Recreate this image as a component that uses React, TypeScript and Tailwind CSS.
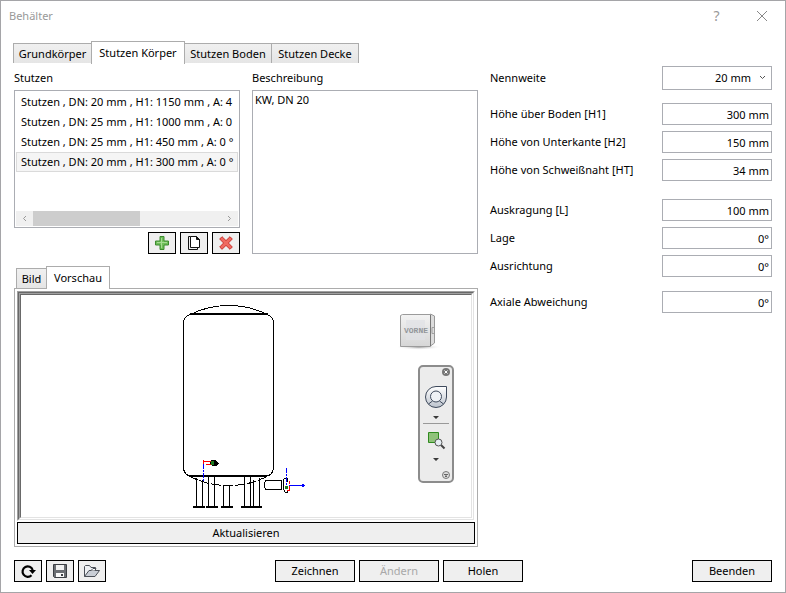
import { useState } from 'react';
import type { ReactNode } from 'react';
import clsx from 'clsx';

const MAIN_TABS = [
  { label: 'Grundkörper', width: 'w-[79px]' },
  { label: 'Stutzen Körper', width: 'w-[94px]' },
  { label: 'Stutzen Boden', width: 'w-[88px]' },
  { label: 'Stutzen Decke', width: 'w-[88px]' },
];

const PREVIEW_TABS = [
  { label: 'Bild', width: 'w-[31px]' },
  { label: 'Vorschau', width: 'w-[64px]' },
];

const NOZZLES = [
  'Stutzen , DN: 20 mm , H1: 1150 mm , A: 4',
  'Stutzen , DN: 25 mm , H1: 1000 mm , A: 0',
  'Stutzen , DN: 25 mm , H1: 450 mm , A: 0 °',
  'Stutzen , DN: 20 mm , H1: 300 mm , A: 0 °',
];

const FIELD_GROUPS = [
  {
    gap: 'mt-[13px]',
    fields: [
      { id: 'h1', label: 'Höhe über Boden [H1]', value: '300 mm' },
      { id: 'h2', label: 'Höhe von Unterkante [H2]', value: '150 mm' },
      { id: 'ht', label: 'Höhe von Schweißnaht [HT]', value: '34 mm' },
    ],
  },
  {
    gap: 'mt-[18px]',
    fields: [
      { id: 'l', label: 'Auskragung [L]', value: '100 mm' },
      { id: 'lage', label: 'Lage', value: '0°' },
      { id: 'ausrichtung', label: 'Ausrichtung', value: '0°' },
    ],
  },
  {
    gap: 'mt-[14px]',
    fields: [{ id: 'axial', label: 'Axiale Abweichung', value: '0°' }],
  },
];

type TabsProps = {
  tabs: { label: string; width: string }[];
  active: number;
  onChange: (index: number) => void;
};

function Tabs({ tabs, active, onChange }: TabsProps) {
  return (
    <div role="tablist" className="flex h-[23px] items-end">
      {tabs.map((tab, i) => (
        <button
          key={tab.label}
          role="tab"
          aria-selected={i === active}
          onClick={() => onChange(i)}
          className={clsx(
            'flex items-center justify-center whitespace-nowrap border border-b-0 border-[#acacac]',
            tab.width,
            i === active ? 'z-10 -ml-px h-full bg-white first:ml-0' : 'mb-px h-5 bg-linear-to-b from-[#f0f0f0] to-[#e5e5e5]',
            i > active && '-ml-px',
          )}
        >
          {tab.label}
        </button>
      ))}
    </div>
  );
}

type PushButtonProps = {
  children: ReactNode;
  label?: string;
  disabled?: boolean;
  className?: string;
};

function PushButton({ children, label, disabled, className }: PushButtonProps) {
  return (
    <button
      aria-label={label}
      disabled={disabled}
      className={clsx(
        'flex h-[22px] items-center justify-center border border-black bg-[#efefef] hover:bg-[#e0eef9] disabled:text-[#a8a8a8]',
        className,
      )}
    >
      {children}
    </button>
  );
}

function Bevel({ children }: { children: ReactNode }) {
  return (
    <div className="border border-t-[#a0a0a0] border-r-white border-b-white border-l-[#a0a0a0]">
      <div className="border border-t-[#696969] border-r-[#e3e3e3] border-b-[#e3e3e3] border-l-[#696969]">{children}</div>
    </div>
  );
}

/* ── icons ── */

function PlusIcon() {
  return (
    <svg width="16" height="16" viewBox="0 0 16 16">
      <path
        d="M6 1.500h4v4.500h4.500v4H10v4.500H6V10H1.500V6H6z"
        fill="#6fbf5a"
        stroke="#3c8a2e"
        strokeLinejoin="round"
      />
      <path d="M7.500 3v10M3 7.500h10" stroke="#a5dc92" fill="none" />
    </svg>
  );
}

function CopyIcon() {
  return (
    <svg width="16" height="16" viewBox="0 0 16 16" fill="none" stroke="#111">
      <path d="M4.500 1.500h-2v13h9v-2" />
      <path d="M4.500 1.500h6l3 3v8h-9z" fill="#fff" />
      <path d="M10.500 1.500v3h3z" fill="#111" />
    </svg>
  );
}

function DeleteIcon() {
  return (
    <svg width="16" height="16" viewBox="0 0 16 16">
      <path
        d="M4 1.700 8 5.600l4-3.900 2.300 2.300L10.400 8l3.900 4-2.300 2.300-4-3.900-4 3.900L1.700 12l3.900-4-3.900-4z"
        fill="#ef6a60"
        stroke="#c9302c"
        strokeLinejoin="round"
      />
    </svg>
  );
}

function ReloadIcon() {
  return (
    <svg width="16" height="16" viewBox="0 0 16 16">
      <path d="M11.500 12.200A5.200 5.200 0 1 1 12.700 7" fill="none" stroke="#000" strokeWidth="2.200" />
      <path d="M9 7h7l-3.500 4z" fill="#000" />
    </svg>
  );
}

function SaveIcon() {
  return (
    <svg width="16" height="16" viewBox="0 0 16 16">
      <path d="M1.500 1.500h13v13h-12l-1-1z" fill="#6b6e73" stroke="#3c3f44" />
      <path d="M4 2h8v5H4z" fill="#f2f2f2" />
      <path d="M4 10h8v4H4z" fill="#fafafa" />
      <path d="M9 11h2v2H9z" fill="#3c3f44" />
    </svg>
  );
}

function FolderIcon() {
  return (
    <svg width="18" height="16" viewBox="0 0 18 16" strokeLinejoin="round" stroke="#4a4f57">
      <path d="M1.500 13.500v-10l1-1h4l1.500 2h4.500v3" fill="#eef0f3" />
      <path d="M1.500 13.500 6 7.500h10.500l-4.500 6z" fill="#c9ced6" />
      <path d="M8 7.500l2-2h3l-1 2" fill="#fff" />
    </svg>
  );
}

/* ── preview ── */

function TankDrawing() {
  return (
    <svg
      viewBox="21 295 450 222"
      width="450"
      height="222"
      fill="none"
      stroke="#000"
      shapeRendering="crispEdges"
      role="img"
      aria-label="Behälter Vorderansicht"
    >
      {/* shell */}
      <path d="M190.500 314.500Q183.500 316 183.500 323V468Q184 475 191 476.500" />
      <path d="M266.500 314.500Q273.500 316 273.500 323V468Q273 475 266 476.500" />
      <path d="M190 314H268M190 476H267" strokeWidth="2" />
      <path d="M190.500 314.500Q208 305.500 228.500 305.500T267.500 314.500" />
      <path d="M188.500 475.500Q206 485.500 228.500 485.500T268.500 475.500" strokeDasharray="10 2" />
      {/* legs */}
      <path d="M196.500 478V507M202.500 480V507M208.500 477V507M214.500 477V507M223.500 485V507M229.500 485V507" />
      <path d="M244.500 477V507M250.500 477V507M253.500 480V507M259.500 478V507" />
      <path d="M193 507H205M206 507H218M221 507H233M241 507H262" strokeWidth="2" />
      {/* small nozzle in front */}
      <path d="M203.500 464V482" stroke="#00f" strokeDasharray="5 1 2 1" />
      <path d="M203.500 460V464M203 461.500H213M206 464.500H212" stroke="#f00" />
      <path d="M211 460h4l4 3-3 3h-4l-2-2z" fill="#000" stroke="none" />
      <path d="M211 461h3v4h-3z" fill="#1e7a1e" stroke="none" />
      {/* side nozzle */}
      <path d="M282 480.500H266.500Q264.500 481 264.500 485T266.500 489.500H282M281.500 480V490" />
      <path d="M283.500 478.500h4v3M283.500 478.500v11l2 3h2v-3" />
      <path d="M285 486h3v3h-3z" fill="#1e7a1e" stroke="none" />
      <path d="M289.500 481V484M287 490.500H289.500V486" stroke="#f00" />
      <path d="M286.500 468V486" stroke="#00f" strokeDasharray="5 1 2 1" />
      <path d="M289 485.500H305M301.500 484.500H304M301.500 486.500H304" stroke="#00f" />
    </svg>
  );
}

function ViewCube() {
  return (
    <svg width="48" height="40" viewBox="0 0 48 40" className="absolute top-4 right-[25px]">
      <defs>
        <linearGradient id="cube" x1="0" y1="0" x2="0" y2="1">
          <stop offset="0" stopColor="#f3f3f3" />
          <stop offset="1" stopColor="#d6d6d6" />
        </linearGradient>
        <radialGradient id="shade">
          <stop offset="0" stopColor="#999" />
          <stop offset="1" stopColor="#fff" stopOpacity="0" />
        </radialGradient>
      </defs>
      <ellipse cx="21" cy="36" rx="23" ry="3" fill="url(#shade)" />
      <path d="M36.500 5l-4-2v32l4-3z" fill="#dcdcdc" stroke="#999" />
      <path d="M2.500 4.500l2-1h28v32h-30z" fill="url(#cube)" stroke="#9b9b9b" />
      <path d="M8 9h19v20H8z" fill="#dfe1e6" opacity=".7" />
      <path d="M32.500 4v31" stroke="#777" />
      <text x="6" y="22" fontSize="8" fontWeight="700" fill="#94979b" fontFamily="Liberation Mono, monospace">
        VORNE
      </text>
      <path d="M36 16.500h-2v6h2" fill="none" stroke="#a0a0a0" />
    </svg>
  );
}

function NavigationBar() {
  return (
    <svg width="36" height="118" viewBox="0 0 36 118" className="absolute top-[70px] right-[17px]">
      <defs>
        <linearGradient id="wheel" x1="0" y1="0" x2="0" y2="1">
          <stop offset="0" stopColor="#fff" />
          <stop offset="1" stopColor="#bcc3cd" />
        </linearGradient>
      </defs>
      <rect x="1" y="1" width="34" height="116" rx="4" fill="#ececec" stroke="#8c8c8c" strokeWidth="2" />
      <circle cx="28" cy="7" r="4" fill="#777" />
      <path d="M26.500 5.500l3 3M29.500 5.500l-3 3" stroke="#fff" />
      {/* steering wheel */}
      <path d="M28.500 21.500H18A10.500 10.500 0 1 0 28.500 32z" fill="url(#wheel)" stroke="#3f4a5c" />
      <path d="M10.500 39l4-3M25.500 39l-4-3" stroke="#3f4a5c" />
      <circle cx="18" cy="31.500" r="5.500" fill="#eef1f5" stroke="#3f4a5c" />
      <path d="M15 51h6l-3 3zM15 93h6l-3 3z" fill="#3a3a3a" />
      <path d="M5 58.500h26" stroke="#999" />
      {/* zoom window */}
      <path d="M10.500 67.500h10v10h-10z" fill="#8fc27a" stroke="#2f8a1f" />
      <path d="M23 80l3.500 3.500" stroke="#444" strokeWidth="2" />
      <circle cx="20.500" cy="77.500" r="3.500" fill="#e6edf3" stroke="#555" />
      <circle cx="28" cy="110" r="3.500" fill="#ddd" stroke="#777" />
      <path d="M26 109.500h4M27 111h2l-1 1z" stroke="#666" fill="#666" />
    </svg>
  );
}

export default function App() {
  const [mainTab, setMainTab] = useState(1);
  const [previewTab, setPreviewTab] = useState(1);
  const [selected, setSelected] = useState(3);

  return (
    <div className="min-h-screen border border-[#a5a5a8] bg-white font-['Noto_Sans','Open_Sans',sans-serif] text-[11px] leading-4 text-black">
      <header className="flex h-[30px] items-center justify-between pl-2 text-[#999]">
        <h1>Behälter</h1>
        <div className="flex h-full">
          <button aria-label="Hilfe" className="w-[45px] text-sm">?</button>
          <button aria-label="Schließen" className="flex w-[46px] items-center justify-center">
            <svg width="12" height="12" viewBox="0 0 12 12" stroke="#888">
              <path d="M1 1l10 10M11 1L1 11" />
            </svg>
          </button>
        </div>
      </header>

      <div className="px-[13px] py-[10px]">
        <div className="-ml-px">
          <Tabs tabs={MAIN_TABS} active={mainTab} onChange={setMainTab} />
        </div>

        <main className="mt-0.5 flex gap-3">
          <div className="min-w-0 flex-1">
            <div className="grid grid-cols-2 gap-3">
              <section className="min-w-0">
                <h2 className="h-6 leading-6">Stutzen</h2>
                <div className="flex h-[138px] flex-col justify-between border border-[#abadb3] p-px">
                  <ul role="listbox" aria-label="Stutzen" className="overflow-hidden">
                    {NOZZLES.map((nozzle, i) => (
                      <li
                        key={nozzle}
                        role="option"
                        aria-selected={i === selected}
                        onClick={() => setSelected(i)}
                        className={clsx(
                          'h-5 border px-1 leading-[18px] whitespace-nowrap',
                          i === selected ? 'border-[#dadada] bg-[#f5f5f5]' : 'border-transparent',
                        )}
                      >
                        {nozzle}
                      </li>
                    ))}
                  </ul>
                  <div className="flex h-[15px] items-stretch bg-[#f0f0f0]">
                    <button aria-label="Nach links" className="flex w-[17px] items-center justify-center">
                      <svg width="5" height="7" viewBox="0 0 5 7" fill="none" stroke="#999">
                        <path d="M4 1L1.500 3.500L4 6" />
                      </svg>
                    </button>
                    <div className="flex-1">
                      <div className="h-full w-[57%] bg-[#cdcdcd]" />
                    </div>
                    <button aria-label="Nach rechts" className="flex w-[17px] items-center justify-center">
                      <svg width="5" height="7" viewBox="0 0 5 7" fill="none" stroke="#999">
                        <path d="M1 1L3.500 3.500L1 6" />
                      </svg>
                    </button>
                  </div>
                </div>
                <div className="mt-1 flex justify-end gap-1">
                  <PushButton label="Hinzufügen" className="w-7"><PlusIcon /></PushButton>
                  <PushButton label="Kopieren" className="w-7"><CopyIcon /></PushButton>
                  <PushButton label="Löschen" className="w-7"><DeleteIcon /></PushButton>
                </div>
              </section>

              <section className="flex min-w-0 flex-col">
                <label htmlFor="beschreibung" className="h-6 leading-6">Beschreibung</label>
                <textarea
                  id="beschreibung"
                  defaultValue="KW, DN 20"
                  className="flex-1 resize-none border border-[#abadb3] px-0.5 leading-[18px] outline-none"
                />
              </section>
            </div>

            <div className="mt-3 pl-0.5">
              <Tabs tabs={PREVIEW_TABS} active={previewTab} onChange={setPreviewTab} />
            </div>
            <section className="-mt-px border border-[#acacac] p-0.5">
              <Bevel>
                <Bevel>
                  <div className="relative overflow-hidden">
                    <TankDrawing />
                    <ViewCube />
                    <NavigationBar />
                  </div>
                </Bevel>
              </Bevel>
              <PushButton className="mt-px w-full">Aktualisieren</PushButton>
            </section>
          </div>

          <form className="w-[282px]">
            <div className="flex h-6 items-center justify-between">
              <label htmlFor="nennweite">Nennweite</label>
              <div className="relative">
                <select
                  id="nennweite"
                  defaultValue="20 mm"
                  className="h-6 w-[110px] appearance-none border border-[#abadb3] bg-white pr-5 text-right [text-align-last:right]"
                >
                  <option>20 mm</option>
                  <option>25 mm</option>
                </select>
                <svg
                  width="7"
                  height="5"
                  viewBox="0 0 7 5"
                  fill="none"
                  stroke="#555"
                  className="pointer-events-none absolute top-[9px] right-[6px]"
                >
                  <path d="M1 1l2.500 2.500L6 1" />
                </svg>
              </div>
            </div>
            {FIELD_GROUPS.map((group) => (
              <div key={group.gap} className={clsx('flex flex-col gap-1.5', group.gap)}>
                {group.fields.map((field) => (
                  <div key={field.id} className="flex items-center justify-between">
                    <label htmlFor={field.id}>{field.label}</label>
                    <input
                      id={field.id}
                      defaultValue={field.value}
                      className="h-[22px] w-[110px] border border-[#abadb3] px-0.5 text-right outline-none"
                    />
                  </div>
                ))}
              </div>
            ))}
          </form>
        </main>

        <footer className="mt-[13px] flex items-center justify-between">
          <div className="flex gap-1">
            <PushButton label="Zurücksetzen" className="w-7"><ReloadIcon /></PushButton>
            <PushButton label="Speichern" className="w-7"><SaveIcon /></PushButton>
            <PushButton label="Öffnen" className="w-7"><FolderIcon /></PushButton>
          </div>
          <div className="flex gap-1">
            <PushButton className="w-20">Zeichnen</PushButton>
            <PushButton className="w-20" disabled>Ändern</PushButton>
            <PushButton className="w-20">Holen</PushButton>
          </div>
          <PushButton className="w-20">Beenden</PushButton>
        </footer>
      </div>
    </div>
  );
}
